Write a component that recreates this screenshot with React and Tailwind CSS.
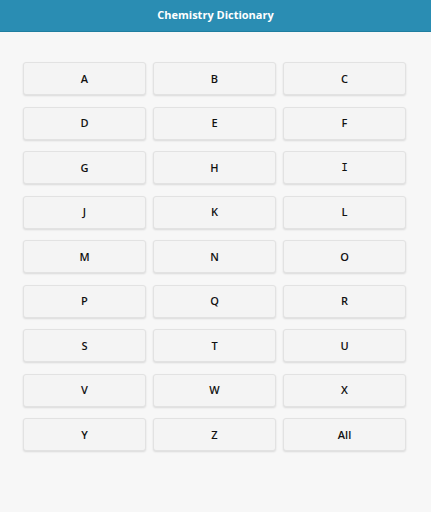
import React from "react";

const letters = ["A","B","C","D","E","F","G","H","I","J","K","L","M","N","O","P","Q","R","S","T","U","V","W","X","Y","Z","All"];

export default function App() {
  return (
    <div className="min-h-[512px] w-[431px] bg-[#f7f7f7] font-['Open_Sans',sans-serif]">
      <div className="flex h-[32px] items-center justify-center border-b border-[#1f7ea0] bg-[#2a8db3]">
        <span className="text-[11px] font-bold text-white">Chemistry Dictionary</span>
      </div>
      <div className="grid w-[406px] grid-cols-3 gap-x-[7px] gap-y-[11.5px] pl-[23px] pt-[30px]">
        {letters.map((l) => (
          <div
            key={l}
            className="flex h-[33px] items-center justify-center rounded-[3px] border border-[#e2e2e2] bg-[#f4f4f4] pt-px text-[11px] font-semibold text-[#111] shadow-[0_1px_2px_rgba(0,0,0,0.12)]"
          >
            {l === "I" ? <span className="font-['DejaVu_Sans_Mono',monospace] text-[11px] font-normal">I</span> : l}
          </div>
        ))}
      </div>
    </div>
  );
}
